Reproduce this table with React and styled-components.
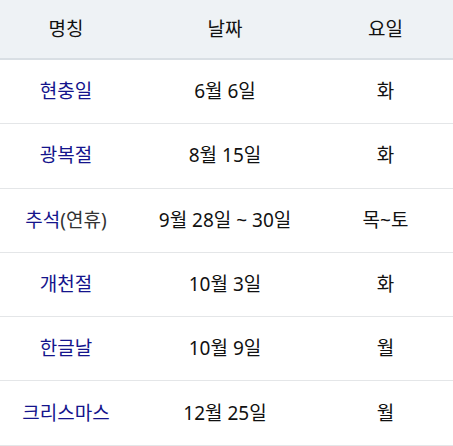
import React from 'react';
import styled, { createGlobalStyle } from 'styled-components';

const GlobalStyle = createGlobalStyle`
    html, body {
        margin: 0;
        padding: 0;
        background: #ffffff;
    }
    body {
        font-family: "Noto Sans", "Noto Sans CJK KR", sans-serif;
    }
`;

const holidays = [
    { name: '현충일', date: '6월 6일', day: '화' },
    { name: '광복절', date: '8월 15일', day: '화' },
    { name: '추석', note: '(연휴)', date: '9월 28일 ~ 30일', day: '목~토' },
    { name: '개천절', date: '10월 3일', day: '화' },
    { name: '한글날', date: '10월 9일', day: '월' },
    { name: '크리스마스', date: '12월 25일', day: '월' },
];

const Table = styled.div`
    width: 453px;
    display: flex;
    flex-direction: column;
`;

const Row = styled.div`
    display: grid;
    grid-template-columns: 132px 186px 135px;
    height: ${({ $head }) => ($head ? '58px' : '63.3px')};
    background: ${({ $head }) => ($head ? '#eef2f5' : '#ffffff')};
    border-bottom: ${({ $head }) => ($head ? '2px solid #d9dfe4' : '1px solid #e4e6e8')};
`;

const Cell = styled.div`
    display: flex;
    align-items: center;
    justify-content: center;
    font-size: 19px;
    line-height: 1;
    color: ${({ $tone }) => ($tone === 'name' ? '#14148c' : '#111111')};
    white-space: nowrap;
`;

const Note = styled.span`
    color: #333333;
`;

export default function App() {
    return (
        <>
            <GlobalStyle />
            <Table>
                <Row $head>
                    <Cell>명칭</Cell>
                    <Cell>날짜</Cell>
                    <Cell>요일</Cell>
                </Row>
                {holidays.map((h) => (
                    <Row key={h.name}>
                        <Cell $tone="name">
                            {h.name}
                            {h.note && <Note>{h.note}</Note>}
                        </Cell>
                        <Cell>{h.date}</Cell>
                        <Cell>{h.day}</Cell>
                    </Row>
                ))}
            </Table>
        </>
    );
}
